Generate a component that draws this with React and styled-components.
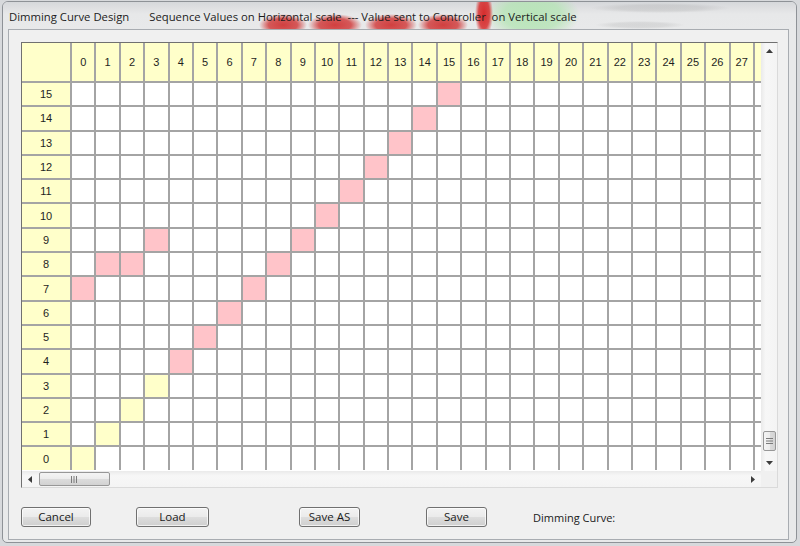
import React from 'react';
import styled, { createGlobalStyle } from 'styled-components';

const GlobalStyle = createGlobalStyle`
  html, body { margin: 0; padding: 0; }
  body {
    width: 800px; height: 546px; overflow: hidden;
    background: #d7d9dc;
    font-family: "Open Sans", "Noto Sans", sans-serif;
  }
`;

const Page = styled.div`
  width: 800px; height: 546px; box-sizing: border-box;
  padding: 1px 0 0 2px;
`;

const Window = styled.div`
  width: 795px; height: 542px; box-sizing: border-box;
  border: 1px solid #8e9297;
  border-radius: 6px 6px 5px 5px;
  background: #e8e9ea;
  display: flex; flex-direction: column;
  overflow: hidden;
`;

const blob = (x, y, rx, ry, c, a) =>
  `radial-gradient(ellipse ${rx}px ${ry}px at ${x}px ${y}px, rgba(${c},${a}) 0%, rgba(${c},${a * 0.85}) 60%, rgba(${c},0) 100%)`;

const TitleBar = styled.div`
  height: 27px; flex: none;
  display: flex; align-items: center;
  padding: 1px 0 0 6px; box-sizing: border-box;
  font-size: 11.3px; color: #1c1c1c; white-space: pre;
  background:
    ${blob(280, 23, 24, 11, '206,40,40', 0.88)},
    ${blob(332, 23, 27, 11, '206,40,40', 0.88)},
    ${blob(388, 23, 26, 11, '206,40,40', 0.88)},
    ${blob(440, 23, 25, 11, '206,40,40', 0.88)},
    ${blob(481, 12, 9, 24, '214,34,34', 0.95)},
    ${blob(529, 13, 48, 26, '180,228,180', 0.9)},
    ${blob(657, 6, 70, 5, '130,130,130', 0.2)},
    ${blob(637, 23, 45, 4, '130,130,130', 0.18)},
    linear-gradient(#d6d8db 0px, #e0e1e3 7px, #e7e8e9 12px, #e8e9ea 27px);
`;

const TitleText = styled.span`
  margin-left: ${(p) => p.$ml || 0}px;
`;

const Client = styled.div`
  margin-left: 5px;
  width: 781px; height: 511px; box-sizing: border-box;
  border: 1px solid #a8acb1;
  background: #f0f0f0;
  padding: 12px 10px 0 12px;
  display: flex; flex-direction: column;
`;

const ScrollView = styled.div`
  width: 757px; height: 446px; box-sizing: border-box;
  border: 1px solid;
  border-color: #707070 #dadada #dadada #707070;
  display: grid;
  grid-template-columns: 739px 16px;
  grid-template-rows: 428px 16px;
  background: #f0f0f0;
`;

const Viewport = styled.div`
  overflow: hidden;
  background: #ffffff;
`;

const Table = styled.div`
  display: grid;
  grid-template-columns: 48px repeat(29, 22.4px);
  grid-template-rows: 38px repeat(16, 22.3px);
  gap: 2px;
  width: max-content;
  background: #a4a4a4;
`;

const Cell = styled.div`
  background: ${(p) => p.$bg};
  display: flex; align-items: center; justify-content: center;
  font-family: "Liberation Sans", Arial, sans-serif;
  font-size: 11px; color: #1e1e1e;
`;

const VScroll = styled.div`
  display: flex; flex-direction: column;
  background: linear-gradient(to right, #eaeaea, #f7f7f7 30%, #f4f4f4);
`;

const HScroll = styled.div`
  display: flex; flex-direction: row;
  background: linear-gradient(#eaeaea, #f7f7f7 30%, #f4f4f4);
`;

const Corner = styled.div`
  background: #f0f0f0;
`;

const ArrowBox = styled.div`
  flex: none; width: 16px; height: 16px;
  display: flex; align-items: center; justify-content: center;
`;

const VTrack = styled.div`
  flex: 1; display: flex; flex-direction: column; justify-content: flex-end;
  align-items: center; padding-bottom: 4px;
`;

const HTrack = styled.div`
  flex: 1; display: flex; align-items: center; padding-left: 1px;
`;

const VThumb = styled.div`
  width: 13px; height: 20px; box-sizing: border-box;
  border: 1px solid #979797; border-radius: 2px;
  background: linear-gradient(to right, #f4f4f4, #ececec 50%, #dcdcdc 51%, #d2d2d2);
  display: flex; align-items: center; justify-content: center;
`;

const HThumb = styled.div`
  width: 71px; height: 14px; box-sizing: border-box;
  border: 1px solid #979797; border-radius: 2px;
  background: linear-gradient(#f4f4f4, #ececec 50%, #dcdcdc 51%, #d2d2d2);
  display: flex; align-items: center; justify-content: center;
`;

const ButtonRow = styled.div`
  margin-top: 19px;
  height: 20px;
  display: flex; align-items: center;
`;

const Button = styled.button`
  flex: none;
  margin-left: ${(p) => p.$ml || 0}px;
  width: ${(p) => p.$w}px; height: 20px;
  box-sizing: border-box; padding: 0;
  border: 1px solid #707070; border-radius: 3px;
  background: linear-gradient(#f3f3f3, #ebebeb 48%, #dddddd 52%, #cfcfcf);
  box-shadow: inset 0 0 0 1px rgba(255, 255, 255, 0.7);
  font-family: "Open Sans", "Noto Sans", sans-serif;
  font-size: 11.5px; color: #1a1a1a;
  line-height: 18px;
`;

const Label = styled.span`
  margin-left: ${(p) => p.$ml || 0}px;
  font-size: 11px; color: #1a1a1a;
`;

const Tri = ({ dir }) => {
  const pts = {
    up: '0,4 3.5,0 7,4',
    down: '0,0 3.5,4 7,0',
    left: '4,0 0,3.5 4,7',
    right: '0,0 4,3.5 0,7',
  }[dir];
  const vertical = dir === 'up' || dir === 'down';
  return (
    <svg width={vertical ? 7 : 4} height={vertical ? 4 : 7} viewBox={vertical ? '0 0 7 4' : '0 0 4 7'}>
      <polygon points={pts} fill="#3c3c3c" />
    </svg>
  );
};

const GripV = () => (
  <svg width="7" height="7" viewBox="0 0 7 7">
    {[0.5, 3, 5.5].map((y) => (
      <line key={y} x1="0" x2="7" y1={y} y2={y} stroke="#7a7a7a" strokeWidth="1" />
    ))}
  </svg>
);

const GripH = () => (
  <svg width="7" height="7" viewBox="0 0 7 7">
    {[0.5, 3, 5.5].map((x) => (
      <line key={x} y1="0" y2="7" x1={x} x2={x} stroke="#7a7a7a" strokeWidth="1" />
    ))}
  </svg>
);

const YELLOW = '#ffffca';
const PINK = '#ffc4c9';
const WHITE = '#ffffff';

const curve = [7, 8, 8, 9, 4, 5, 6, 7, 8, 9, 10, 11, 12, 13, 14, 15];
const NCOLS = 29;
const VISIBLE_LABELS = 28;

const cellBg = (row, col) => {
  if (col < curve.length && curve[col] === row) return PINK;
  if (row <= 3 && row === col) return YELLOW;
  return WHITE;
};

export default function App() {
  const rows = [];
  for (let r = 15; r >= 0; r--) rows.push(r);
  const cols = Array.from({ length: NCOLS }, (_, i) => i);

  return (
    <>
      <GlobalStyle />
      <Page>
        <Window>
          <TitleBar>
            <TitleText>Dimming Curve Design</TitleText>
            <TitleText $ml={20}>Sequence Values on Horizontal scale  --- Value sent to Controller  on Vertical scale</TitleText>
          </TitleBar>
          <Client>
            <ScrollView>
              <Viewport>
                <Table>
                  <Cell $bg={YELLOW} />
                  {cols.map((c) => (
                    <Cell key={'h' + c} $bg={YELLOW}>{c < VISIBLE_LABELS ? c : ''}</Cell>
                  ))}
                  {rows.map((r) => (
                    <React.Fragment key={'r' + r}>
                      <Cell $bg={YELLOW}>{r}</Cell>
                      {cols.map((c) => (
                        <Cell key={c} $bg={cellBg(r, c)} />
                      ))}
                    </React.Fragment>
                  ))}
                </Table>
              </Viewport>
              <VScroll>
                <ArrowBox><Tri dir="up" /></ArrowBox>
                <VTrack>
                  <VThumb><GripV /></VThumb>
                </VTrack>
                <ArrowBox><Tri dir="down" /></ArrowBox>
              </VScroll>
              <HScroll>
                <ArrowBox><Tri dir="left" /></ArrowBox>
                <HTrack>
                  <HThumb><GripH /></HThumb>
                </HTrack>
                <ArrowBox><Tri dir="right" /></ArrowBox>
              </HScroll>
              <Corner />
            </ScrollView>
            <ButtonRow>
              <Button $w={70}>Cancel</Button>
              <Button $w={73} $ml={45}>Load</Button>
              <Button $w={61} $ml={90}>Save AS</Button>
              <Button $w={61} $ml={66}>Save</Button>
              <Label $ml={46}>Dimming Curve:</Label>
            </ButtonRow>
          </Client>
        </Window>
      </Page>
    </>
  );
}
